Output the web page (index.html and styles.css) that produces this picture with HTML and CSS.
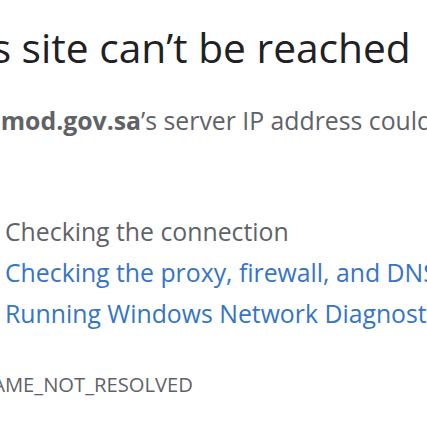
FILE: index.html
```html
<!DOCTYPE html>
<html lang="en">
<head>
<meta charset="utf-8">
<title>This site can’t be reached</title>
<link rel="stylesheet" href="styles.css">
</head>
<body>
<div class="page">
  <h1 class="title">This site can’t be reached</h1>
  <p class="summary"><strong>www.mod.gov.sa</strong>’s server IP address could not be found.</p>
  <p class="try">Try:</p>
  <ul class="suggestions">
    <li class="plain">Checking the connection</li>
    <li><a href="#" class="link">Checking the proxy, firewall, and DNS configuration</a></li>
    <li><a href="#" class="link">Running Windows Network Diagnostics</a></li>
  </ul>
  <div class="code">ERR_NAME_NOT_RESOLVED</div>
</div>
</body>
</html>
```
FILE: styles.css
```css
html, body {
  margin: 0;
  padding: 0;
  background: #ffffff;
  overflow: hidden;
}
body {
  font-family: "Open Sans", "Noto Sans", sans-serif;
  color: #5f6368;
  width: 427px;
  height: 427px;
}
.page {
  white-space: nowrap;
}
.title {
  margin: 0 0 0 -66px;
  padding-top: 23px;
  font-size: 40.7px;
  line-height: 48px;
  font-weight: 400;
  color: #202124;
}
.summary {
  margin: 33px 0 0 -70px;
  font-size: 24.8px;
  line-height: 32px;
}
.summary strong {
  font-weight: 700;
}
.try {
  margin: 4px 0 0 -73px;
  font-size: 24.8px;
  line-height: 32px;
}
.suggestions {
  list-style: none;
  margin: 39px 0 0;
  padding: 0 0 0 5px;
  font-size: 24.8px;
  line-height: 41px;
}
.plain {
  color: #5f6368;
}
.link {
  color: #3674c8;
  text-decoration: none;
}
.code {
  margin: 36px 0 0 -68px;
  font-size: 20.2px;
  line-height: 28px;
  color: #5f6368;
}
```
